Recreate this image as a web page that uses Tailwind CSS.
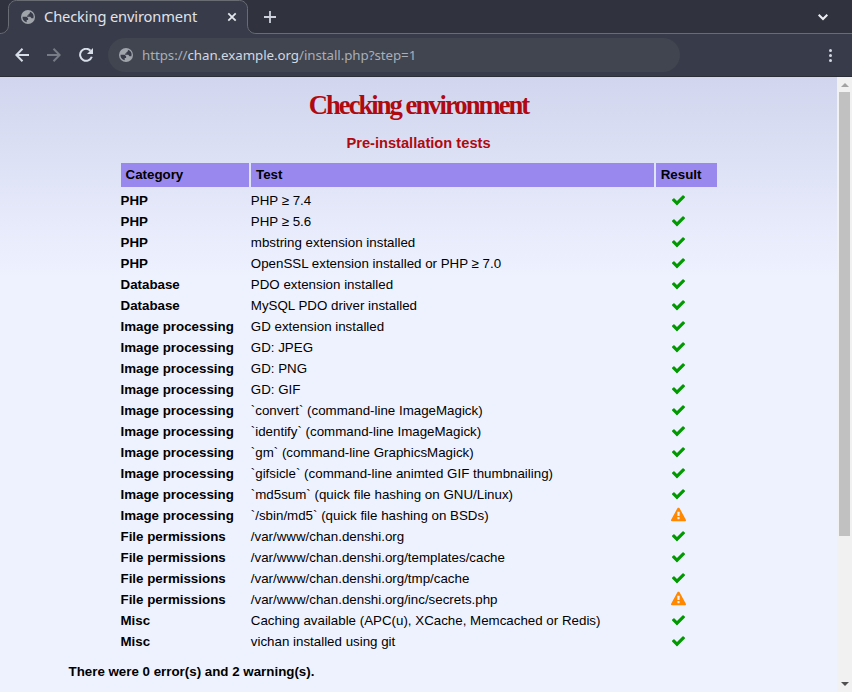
<!DOCTYPE html>
<html lang="en">
<head>
<meta charset="utf-8">
<title>Checking environment</title>
<script src="https://cdn.jsdelivr.net/npm/@tailwindcss/browser@4"></script>
</head>
<body class="w-[852px] h-[692px] overflow-hidden flex flex-col bg-[#383b49]">
<svg class="hidden">
  <symbol id="globe" viewBox="0 0 14 14"><circle cx="7" cy="7" r="7" fill="#a0a4ab"/><path d="M1.500 6.800H5.600L7.100 8.300V9.900H5.700V12.300A5.500 5.500 0 0 1 1.500 6.800ZM8.900 1.800V3.300L7.400 4.200V5.500H6.100V6.800H9.300L10.500 8.300H12.400A5.500 5.500 0 0 0 8.900 1.800Z" fill="#383b49"/></symbol>
  <symbol id="check" viewBox="0 0 1792 1792"><path fill="#009900" d="M1671 566q0 40-28 68l-724 724-136 136q-28 28-68 28t-68-28l-136-136-362-362q-28-28-28-68t28-68l136-136q28-28 68-28t68 28l294 295 656-657q28-28 68-28t68 28l136 136q28 28 28 68z"/></symbol>
  <symbol id="warn" viewBox="0 0 1792 1792"><path fill="#ff8800" d="M1024 1375v-190q0-14-9.5-23.5t-22.5-9.5h-192q-13 0-22.5 9.5t-9.5 23.5v190q0 14 9.5 23.5t22.5 9.5h192q13 0 22.5-9.5t9.5-23.5zm-2-374l18-459q0-12-10-19-13-11-24-11h-220q-11 0-24 11-10 7-10 21l17 457q0 10 10 16.5t24 6.5h185q14 0 23.5-6.5t10.5-16.5zm-14-934l768 1408q35 63-2 126-17 29-46.5 46t-63.5 17h-1536q-34 0-63.5-17t-46.5-46q-37-63-2-126l768-1408q17-31 47-49t65-18 65 18 47 49z"/></symbol>
</svg>

<div class="relative h-[34px] shrink-0 bg-[#30333e] flex items-center font-['Noto_Sans',sans-serif]">
  <svg class="absolute inset-0" width="852" height="34" fill="none"><path d="M0 33.5C5 33.5 8.500 30 8.500 25V8.500C8.500 4 12 .5 16.500 .5H239.500C244 .5 247.500 4 247.500 8.500V25C247.500 30 251 33.500 256 33.500V34H0Z" fill="#383b49"/><path d="M0 33.5C5 33.5 8.500 30 8.500 25V8.500C8.500 4 12 .5 16.500 .5H239.500C244 .5 247.500 4 247.500 8.500V25C247.500 30 251 33.500 256 33.500H852" stroke="#696c73"/></svg>
  <div class="relative w-[248px] pl-[21px] pr-[11px] flex items-center">
    <svg class="w-3.5 h-3.5"><use href="#globe"/></svg>
    <span class="relative -top-px ml-[9px] text-[14.667px] leading-5 tracking-[-0.13px] text-[#e0e3ea] whitespace-nowrap">Checking environment</span>
    <svg class="ml-auto" width="10" height="10" stroke="#e3e6ec" stroke-width="1.8"><path d="M1.300 1.300 8.700 8.700M8.700 1.300 1.300 8.700"/></svg>
  </div>
  <svg class="relative ml-4" width="12" height="12" stroke="#cdd2dc" stroke-width="1.8"><path d="M6 0V12M0 6H12"/></svg>
  <svg class="relative ml-auto mr-6" width="10" height="8" fill="none" stroke="#eceef2" stroke-width="2"><path d="m.7 1.700 4.300 4.300 4.300-4.300"/></svg>
</div>

<div class="h-[43px] shrink-0 flex items-center border-b border-[#2b2d37] pl-[15px] pr-5 font-['Noto_Sans',sans-serif]">
  <svg width="14" height="14" fill="none" stroke="#d8dee9" stroke-width="2"><path d="M14 7H1.500M7.500.8 1.300 7l6.200 6.200"/></svg>
  <svg class="ml-[18px]" width="14" height="14" fill="none" stroke="#777b86" stroke-width="2"><path d="M0 7h12.500M6.500.8 12.700 7l-6.200 6.200"/></svg>
  <svg class="ml-[18px]" width="14" height="14" fill="none" stroke="#d8dee9" stroke-width="2"><path d="M11.500 2.700A6 6 0 1 0 12.800 8.700"/><path d="M14 0v6H8z" fill="#d8dee9" stroke="none"/></svg>
  <div class="ml-[15px] w-[572px] h-[34px] rounded-full bg-[#40454f] flex items-center pl-[11px]">
    <svg class="w-3.5 h-3.5"><use href="#globe"/></svg>
    <span class="ml-[9px] text-[13.333px] leading-5 tracking-[-0.06px] text-[#a9aeb8] whitespace-nowrap">https://<span class="text-[#d3d8e2]">chan.example.org</span>/install.php?step=1</span>
  </div>
  <svg class="ml-auto" width="4" height="14" fill="#d3d8e2"><circle cx="2.500" cy="2.500" r="1.500"/><circle cx="2.500" cy="7.500" r="1.500"/><circle cx="2.500" cy="12.500" r="1.500"/></svg>
</div>

<div class="flex-1 min-h-0 flex">
  <main class="w-[837px] overflow-hidden bg-[#eef2ff] bg-[linear-gradient(to_bottom,#d1d5ee_0px,#eef2ff_200px)] font-['Liberation_Sans',sans-serif] text-[13.333px] text-black">
    <h1 class="pt-[12px] h-[47px] text-center font-['Liberation_Serif',serif] font-bold text-[26.667px] leading-[32px] tracking-[-2px] text-[#af0a0f]">Checking environment</h1>
    <h2 class="mt-[9px] h-[20px] text-center font-bold text-[14.667px] leading-[20px] text-[#af0a0f]">Pre-installation tests</h2>
    <div class="mt-[10px] ml-[121px] w-[596px] h-[24px] grid grid-cols-[128px_403px_61px] gap-x-[2px] font-bold leading-[24px]">
      <div class="bg-[#9988ee] pl-[4.5px]">Category</div><div class="bg-[#9988ee] pl-[5px]">Test</div><div class="bg-[#9988ee] pl-[4.700px]">Result</div>
    </div>
    <div id="rows" class="mt-[3px] ml-[120.5px] w-[596px]"></div>
    <p class="mt-[9px] ml-[68.5px] font-bold leading-[21px]">There were 0 error(s) and 2 warning(s).</p>
  </main>
  <div class="w-[15px] bg-[#f1f1f1] flex flex-col items-center">
    <svg class="mt-[6px]" width="8" height="4" fill="#a3a3a3"><path d="M4 0 8 4H0z"/></svg>
    <div class="mt-[5px] w-[11px] h-[444px] bg-[#c1c1c1]"></div>
    <svg class="mt-auto mb-[6px]" width="8" height="4" fill="#505050"><path d="M0 0h8L4 4z"/></svg>
  </div>
</div>
<script>
const rows = [
  ['PHP', 'PHP ≥ 7.4'],
  ['PHP', 'PHP ≥ 5.6'],
  ['PHP', 'mbstring extension installed'],
  ['PHP', 'OpenSSL extension installed or PHP ≥ 7.0'],
  ['Database', 'PDO extension installed'],
  ['Database', 'MySQL PDO driver installed'],
  ['Image processing', 'GD extension installed'],
  ['Image processing', 'GD: JPEG'],
  ['Image processing', 'GD: PNG'],
  ['Image processing', 'GD: GIF'],
  ['Image processing', '`convert` (command-line ImageMagick)'],
  ['Image processing', '`identify` (command-line ImageMagick)'],
  ['Image processing', '`gm` (command-line GraphicsMagick)'],
  ['Image processing', '`gifsicle` (command-line animted GIF thumbnailing)'],
  ['Image processing', '`md5sum` (quick file hashing on GNU/Linux)'],
  ['Image processing', '`/sbin/md5` (quick file hashing on BSDs)', 'warn'],
  ['File permissions', '/var/www/chan.denshi.org'],
  ['File permissions', '/var/www/chan.denshi.org/templates/cache'],
  ['File permissions', '/var/www/chan.denshi.org/tmp/cache'],
  ['File permissions', '/var/www/chan.denshi.org/inc/secrets.php', 'warn'],
  ['Misc', 'Caching available (APC(u), XCache, Memcached or Redis)'],
  ['Misc', 'vichan installed using git']
];
document.getElementById('rows').innerHTML = rows.map(([category, test, icon = 'check']) =>
  `<div class="h-[21px] grid grid-cols-[130.3px_420px_15px] leading-[21px] whitespace-nowrap"><b>${category}</b><span>${test}</span><svg class="mt-[2px] w-[15px] h-[15px] overflow-visible"><use href="#${icon}" y="0.4"/></svg></div>`).join('');
</script>
</body>
</html>
